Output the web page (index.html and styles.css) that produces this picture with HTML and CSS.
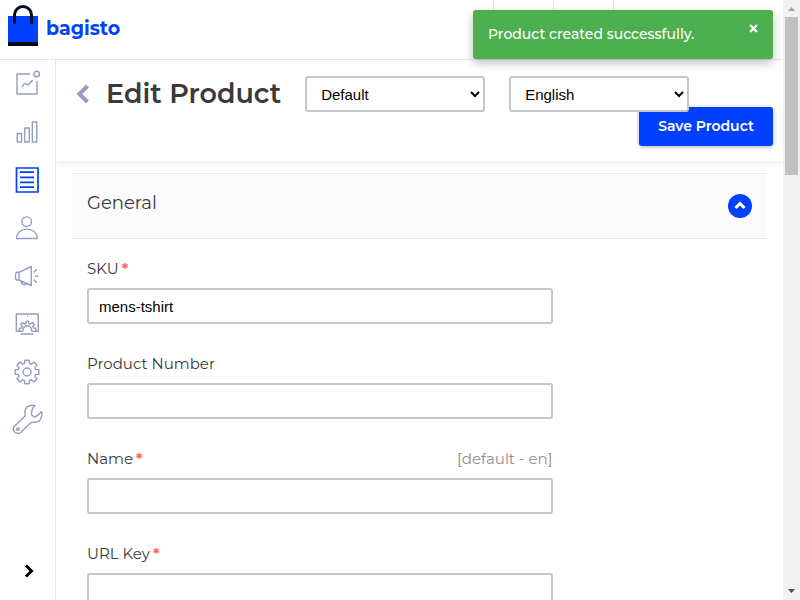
FILE: index.html
```
<!DOCTYPE html>
<html lang="en">
<head>
<meta charset="utf-8">
<title>Edit Product</title>
<link rel="stylesheet" href="styles.css">
</head>
<body>
<div class="app">
  <header class="topbar">
    <a class="brand" href="#">
      <svg class="brand-mark" viewBox="0 0 30 42" aria-hidden="true">
        <path fill="#0041ff" d="M0 11h30v26H0z"/>
        <path fill="#000814" d="M0 37h30v4H0z"/>
        <path d="M6.500 17.500V10a8.500 8.500 0 0 1 17 0v7.500" fill="none" stroke="#000c24" stroke-width="3" stroke-linecap="round"/>
      </svg>
      <span>bagisto</span>
    </a>
    <div class="topbar-cells"><i></i><i></i><i></i></div>
  </header>
  <div class="body">
    <nav class="sidebar">
      <a href="#" aria-label="Dashboard"><svg viewBox="0 0 32 32"><path d="M19 6H6v20h20V13M11 18.700l2.700-3.400L17 17l4.700-5"/><circle cx="25.700" cy="6" r="2.800"/></svg></a>
      <a href="#" aria-label="Sales"><svg viewBox="0 0 32 32"><path d="M6.200 17.500h4.300v8.500H6.200zM13.800 12h4.500v14h-4.500zM21.300 6h4.500v20h-4.500z"/></svg></a>
      <a href="#" class="active" aria-label="Catalog"><svg viewBox="0 0 32 32"><path d="M5.500 4h21.500v24H5.500zM9 8.200h14M9 13.300h14M9 18.300h14M9 23.200h14"/></svg></a>
      <a href="#" aria-label="Customers"><svg viewBox="0 0 32 32"><circle cx="15.700" cy="9.700" r="4.800"/><path d="M5.500 26.500c0-12.500 20.800-12.500 20.800 0z"/></svg></a>
      <a href="#" aria-label="Marketing"><svg viewBox="0 0 32 32"><path d="M8 12.300H6c-2 0-2 7.700 0 7.700h2zM8 12.300L20.300 6.500v19L8 20M20.300 6v20M10.300 21c.2 4.500 4.500 4.500 5.300 2.300M22.700 12.500l3-3M23.700 16.300h3.800M22.700 19.500l3 3"/></svg></a>
      <a href="#" aria-label="Content"><svg viewBox="0 0 32 32"><path d="M8 23.300H5.300V6h22v17.300H24.500M9.700 26h13M16 8.300h.8M12 23.300H8.300v-3l2.200-.3.700-1.700-1.500-1.700 2-2 1.800 1.400 1.600-.7.200-2.200h2.400l.2 2.200 1.600.7 1.800-1.400 2 2-1.500 1.700.7 1.700 2.200.3v3h-4M12 23.300v-1.300a4.200 4.200 0 0 1 8.600 0v1.300"/></svg></a>
      <a href="#" aria-label="Configure"><svg viewBox="0 0 32 32"><path d="M13.600 7.400l.2-3.200h4.400l.2 3.200 2 .8 2.500-2.100 3.100 3.100-2.200 2.400.8 2 3.200.2v4.400l-3.200.2-.8 2 2.200 2.400-3.100 3.100-2.500-2.100-2 .8-.2 3.200h-4.400l-.2-3.200-2-.8-2.500 2.100L6 22.800l2.200-2.400-.8-2-3.200-.2v-4.400l3.200-.2.800-2L6 9.200l3.100-3.100 2.500 2.100z"/><circle cx="16" cy="16" r="4"/></svg></a>
      <a href="#" aria-label="Settings"><svg viewBox="0 0 32 32"><path d="M24 1.800C21 4 20.300 7.500 20.700 11l2.600 2c3 .2 4.500-3 7-5.300.7 0 .8 1 .7 2-.3 3-1 5.500-2.700 7.300-2.300 2-5.500.8-8.600 1.700L10 28.300c-4.200 3.200-9.500-1.500-7-5.600l11.300-11C13 7 14.500 2.500 18.500 1.700c2-.5 4.500-.5 5.500.1z"/><circle cx="7" cy="25.300" r="1.300"/></svg></a>
      <button class="expand" type="button" aria-label="Expand menu"><svg viewBox="0 0 10 14"><path d="M2 1.500L7.500 7 2 12.500"/></svg></button>
    </nav>
    <form class="page">
      <div class="page-header">
        <div class="title-row">
          <a class="back" href="#" aria-label="Back"><svg viewBox="0 0 12 20"><path d="M11 2L3 10l8 8"/></svg></a>
          <h1>Edit Product</h1>
          <select class="control" aria-label="Channel"><option>Default</option></select>
          <select class="control" aria-label="Locale"><option>English</option></select>
        </div>
        <button class="save" type="submit">Save Product</button>
      </div>
      <section class="panel">
        <header class="panel-head">
          <h2>General</h2>
          <button class="toggle" type="button" aria-label="Collapse"><svg viewBox="0 0 24 24"><path d="M7.500 14l4.500-4.500 4.500 4.500"/></svg></button>
        </header>
        <div class="fields">
          <div class="field">
            <label for="sku">SKU<b>*</b></label>
            <input class="control" id="sku" type="text" value="mens-tshirt">
          </div>
          <div class="field">
            <label for="number">Product Number</label>
            <input class="control" id="number" type="text">
          </div>
          <div class="field">
            <label for="name">Name<b>*</b><span class="scope">[default - en]</span></label>
            <input class="control" id="name" type="text">
          </div>
          <div class="field">
            <label for="url">URL Key<b>*</b></label>
            <input class="control" id="url" type="text">
          </div>
        </div>
      </section>
    </form>
  </div>
  <div class="toast" role="status">
    <span>Product created successfully.</span>
    <button type="button" aria-label="Close"><svg viewBox="0 0 10 10"><path d="M1.200 1.200l7.600 7.600M8.800 1.200l-7.600 7.600"/></svg></button>
  </div>
</div>
<div class="scrollbar" aria-hidden="true">
  <svg viewBox="0 0 17 17"><path fill="#a3a3a3" d="M5 11l3.500-4 3.500 4z"/></svg>
  <div class="track"><div class="thumb"></div></div>
  <svg viewBox="0 0 17 17"><path fill="#505050" d="M5 6h7l-3.500 4z"/></svg>
</div>
</body>
</html>
```
FILE: styles.css
```
* { box-sizing: border-box; }

body {
  margin: 0;
  display: flex;
  height: 100vh;
  overflow: hidden;
  background: #fff;
  color: #3a3a3a;
  font-family: Montserrat, Inter, sans-serif;
  font-size: 15px;
}

svg { display: block; fill: none; }
button { border: 0; padding: 0; font: inherit; cursor: pointer; }
h1, h2 { margin: 0; }

.app {
  position: relative;
  flex: 1;
  min-width: 0;
  display: flex;
  flex-direction: column;
}

.topbar {
  flex: none;
  display: flex;
  justify-content: space-between;
  height: 60px;
  padding-left: 8px;
  border-bottom: 1px solid #e7e7e7;
}

.brand {
  display: flex;
  align-items: center;
  gap: 8px;
  height: 52px;
  color: #0041ff;
  font-size: 19px;
  font-weight: 700;
  text-decoration: none;
}
.brand span { padding-top: 4px; }
.brand-mark { width: 30px; height: 42px; }

.topbar-cells { display: flex; width: 290px; }
.topbar-cells i { width: 60px; border-left: 1px solid #e7e7e7; }
.topbar-cells i:nth-child(2) { margin-top: 2px; }

.body { flex: 1; display: flex; min-height: 0; }

.sidebar {
  flex: none;
  display: flex;
  flex-direction: column;
  align-items: center;
  gap: 16px;
  width: 56px;
  padding: 8px 2px 22px 0;
  border-right: 1px solid #e7e7e7;
}
.sidebar a { color: #979bc2; }
.sidebar a.active { color: #0041ff; }
.sidebar a svg { width: 32px; height: 32px; stroke: currentColor; stroke-width: 1.4; stroke-linejoin: round; }
.sidebar a.active svg { stroke-width: 1.7; stroke-linejoin: miter; }
.expand { margin-top: auto; margin-left: 4px; background: none; }
.expand svg { width: 10px; height: 14px; stroke: #000; stroke-width: 3; }

.page { flex: 1; min-width: 0; overflow: hidden; }

.page-header {
  display: flex;
  flex-direction: column;
  align-items: flex-start;
  padding: 16px 10px 15px 20px;
  box-shadow: 0 3px 6px rgba(0, 0, 0, 0.06);
}
.title-row {
  position: relative;
  z-index: 1;
  display: flex;
  align-items: center;
}
.back { margin-right: 17px; }
.back svg { width: 13px; height: 20px; stroke: #979bc2; stroke-width: 4; }
h1 { margin-right: 24px; font-size: 27px; font-weight: 600; line-height: 36px; white-space: nowrap; }

.control {
  height: 36px;
  border: 2px solid #c7c7c7;
  border-radius: 3px;
  padding: 0 10px;
  background: #fff;
  color: #000;
  font-family: "Liberation Sans", Arial, sans-serif;
  font-size: 15px;
}
select.control { width: 180px; padding-right: 0; }
select.control + select.control { margin-left: 24px; }

.save {
  align-self: flex-end;
  width: 134px;
  height: 39px;
  margin-top: -5px;
  padding-bottom: 2px;
  border-radius: 3px;
  background: #0041ff;
  color: #fff;
  font-size: 14px;
  font-weight: 600;
  box-shadow: 0 1px 4px rgba(0, 0, 0, 0.3);
}

.panel { margin: 12px 16px 0; }
.panel-head {
  display: flex;
  align-items: center;
  justify-content: space-between;
  height: 66px;
  padding: 0 15px;
  border: solid #e7e7e7;
  border-width: 1px 0;
  background: #fbfbfb;
}
h2 { padding-bottom: 6px; font-size: 18px; font-weight: 400; line-height: 24px; }
.toggle { border-radius: 50%; background: #0041ff; }
.toggle svg { width: 24px; height: 24px; stroke: #fff; stroke-width: 3; }

.fields {
  display: flex;
  flex-direction: column;
  gap: 30px;
  padding: 20px 15px;
}
.field { display: flex; flex-direction: column; gap: 9px; width: 70%; }
.field label { line-height: 20px; }
.field b { margin-left: 3px; color: #fc6868; font-weight: 700; }
.scope { float: right; color: #8e8e8e; }

.toast {
  position: absolute;
  z-index: 2;
  top: 10px;
  right: 10px;
  display: flex;
  justify-content: space-between;
  width: 300px;
  padding: 14px 15px 15px;
  border-radius: 3px;
  background: #4caf50;
  color: #fff;
  font-size: 14px;
  font-weight: 500;
  line-height: 20px;
  box-shadow: 0 4px 10px rgba(0, 0, 0, 0.25);
}
.toast button { align-self: flex-start; background: none; }
.toast button svg { width: 9px; height: 9px; stroke: #fff; stroke-width: 2.4; }

.scrollbar {
  flex: none;
  display: flex;
  flex-direction: column;
  width: 17px;
  background: #f1f1f1;
}
.track { flex: 1; padding: 0 2px; }
.thumb { height: 28%; background: #c1c1c1; }
```
